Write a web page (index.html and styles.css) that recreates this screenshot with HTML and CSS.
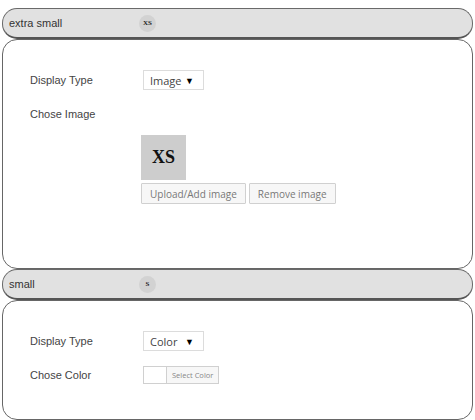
FILE: index.html
```html
<!DOCTYPE html>
<html>
<head>
<meta charset="utf-8">
<link rel="stylesheet" href="styles.css">
</head>
<body>
<div class="accordion">
  <div class="acc-header">
    <span class="acc-title">extra small</span>
    <span class="badge">XS</span>
  </div>
  <div class="acc-panel panel-image">
    <div class="row">
      <div class="label">Display Type</div>
      <div class="select"><span>Image</span><span class="arrow">&#9660;</span></div>
    </div>
    <div class="row row-label">
      <div class="label">Chose Image</div>
    </div>
    <div class="image-block">
      <div class="preview">XS</div>
      <div class="buttons">
        <button class="btn">Upload/Add image</button>
        <button class="btn">Remove image</button>
      </div>
    </div>
  </div>
  <div class="acc-header">
    <span class="acc-title">small</span>
    <span class="badge">S</span>
  </div>
  <div class="acc-panel panel-color">
    <div class="row">
      <div class="label">Display Type</div>
      <div class="select"><span>Color</span><span class="arrow">&#9660;</span></div>
    </div>
    <div class="row row-color">
      <div class="label">Chose Color</div>
      <div class="color-picker">
        <span class="swatch"></span>
        <span class="pick-btn">Select Color</span>
      </div>
    </div>
  </div>
</div>
</body>
</html>
```

FILE: styles.css
```css
* { box-sizing: border-box; }
html, body { margin: 0; padding: 0; background: #fff; }
body { font-family: "Liberation Sans", Arial, sans-serif; color: #444; }
.accordion { padding: 8px 2px 0 2px; }
.acc-header {
  height: 31px;
  background: #e1e1e1;
  border: 1px solid #6a6a6a;
  border-bottom: 2px solid #555;
  border-radius: 15px;
  display: flex;
  align-items: center;
  padding-left: 6px;
  font-size: 11px;
  color: #333;
}
.acc-title { width: 130px; }
.badge {
  width: 17px; height: 17px;
  border-radius: 50%;
  background: #d2d2d2;
  display: flex; align-items: center; justify-content: center;
  font-family: "Liberation Serif", serif;
  font-weight: bold;
  font-size: 7px;
  color: #222;
}
.acc-panel {
  border: 1px solid #666;
  border-radius: 15px;
  padding: 30px 0 0 27px;
  font-size: 11px;
}
.panel-image { height: 230px; }
.panel-color { height: 120px; }
.row { display: flex; align-items: center; height: 20px; }
.label { width: 113px; color: #444; }
.row-label { margin-top: 14px; }
.row-color { margin-top: 15px; height: 18px; }
.select {
  width: 61px; height: 20px;
  border: 1px solid #dcdcdc;
  display: flex; align-items: center;
  padding-left: 6px;
  font-family: "Open Sans", sans-serif;
  font-size: 11px;
  color: #444;
}
.arrow { margin-left: auto; margin-right: 9px; font-size: 9px; color: #000; }
.image-block { margin: 11px 0 0 111px; }
.preview {
  width: 45px; height: 45px;
  background: #cdcdcd;
  display: flex; align-items: center; justify-content: center;
  font-family: "Liberation Serif", serif;
  font-weight: bold;
  font-size: 18px;
  color: #111;
}
.buttons { display: flex; gap: 3px; margin-top: 3px; }
.btn {
  height: 21px;
  border: 1px solid #d0d0d0;
  background: #f7f7f7;
  font-family: "Open Sans", sans-serif;
  font-size: 10px;
  color: #777;
  padding: 0 8px;
  border-radius: 1px;
}
.color-picker { display: flex; height: 18px; }
.swatch {
  width: 23px; height: 18px;
  border: 1px solid #d0d0d0;
  border-right: none;
  background: #fff;
}
.pick-btn {
  height: 18px;
  border: 1px solid #d0d0d0;
  background: #f7f7f7;
  font-family: "Open Sans", sans-serif;
  font-size: 7.5px;
  color: #888;
  padding: 0 5px;
  display: flex; align-items: center;
}
```
